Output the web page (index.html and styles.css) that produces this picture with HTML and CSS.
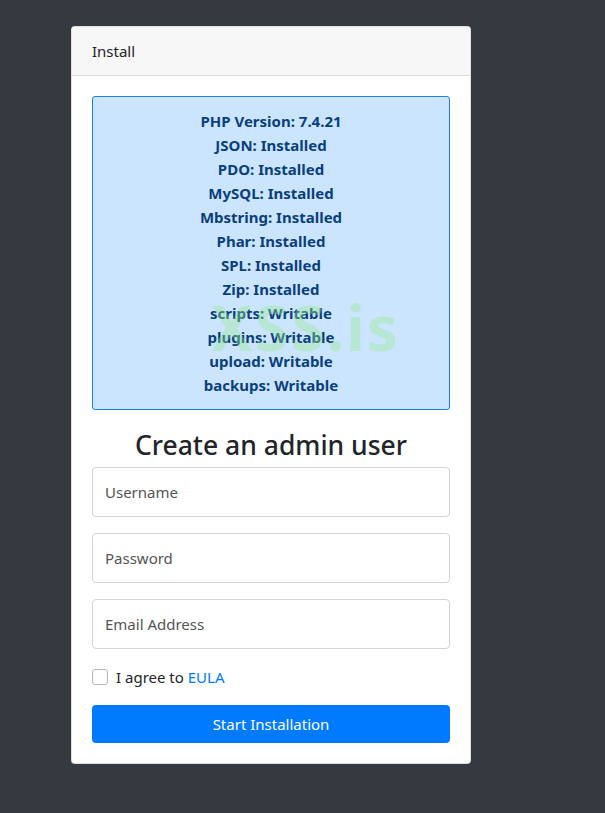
FILE: index.html
```html
<!DOCTYPE html>
<html>
<head>
<meta charset="utf-8">
<link rel="stylesheet" href="styles.css">
</head>
<body>
<div class="card">
  <div class="card-header">Install</div>
  <div class="card-body">
    <div class="alert">
      <div>PHP Version: 7.4.21</div>
      <div>JSON: Installed</div>
      <div>PDO: Installed</div>
      <div>MySQL: Installed</div>
      <div>Mbstring: Installed</div>
      <div>Phar: Installed</div>
      <div>SPL: Installed</div>
      <div>Zip: Installed</div>
      <div>scripts: Writable</div>
      <div>plugins: Writable</div>
      <div>upload: Writable</div>
      <div>backups: Writable</div>
      <span class="watermark">XSS.is</span>
    </div>
    <h2 class="title">Create an admin user</h2>
    <div class="field"><input class="input" type="text" placeholder="Username"></div>
    <div class="field"><input class="input" type="password" placeholder="Password"></div>
    <div class="field"><input class="input" type="email" placeholder="Email Address"></div>
    <label class="check"><span class="box"></span><span>I agree to <a class="link" href="#">EULA</a></span></label>
    <button class="btn">Start Installation</button>
  </div>
</div>
</body>
</html>
```
FILE: styles.css
```css
* { box-sizing: border-box; }
html, body { margin: 0; padding: 0; }
body {
  background: #343a40;
  font-family: "Noto Sans", "Open Sans", sans-serif;
  color: #212529;
  font-size: 16px;
  padding: 26px 0 0 71px;
  min-height: 813px;
}
.card {
  width: 400px;
  background: #fff;
  border: 1px solid rgba(0,0,0,.125);
  border-radius: 4px;
  overflow: hidden;
}
.card-header {
  background: #f7f7f7;
  border-bottom: 1px solid #dcdcdc;
  height: 49px;
  padding: 0 20px;
  display: flex;
  align-items: center;
  font-size: 15px;
  color: #212529;
}
.card-body { padding: 20px 20px 20px 20px; }
.alert {
  position: relative;
  background: #cce5ff;
  border: 1px solid #1e7fe8;
  border-radius: 3px;
  color: #0a3f7c;
  font-weight: 700;
  font-size: 15px;
  line-height: 24px;
  text-align: center;
  padding: 12px 0;
}
.watermark {
  position: absolute;
  left: 118px;
  top: 199px;
  font-size: 62px;
  line-height: 62px;
  font-weight: 700;
  color: rgba(150, 235, 140, 0.38);
  letter-spacing: 2px;
  pointer-events: none;
}
.title {
  font-size: 26.5px;
  font-weight: 500;
  text-align: center;
  margin: 18px 0 5px;
  line-height: 34px;
  color: #212529;
}
.field { margin-bottom: 16px; }
.input {
  width: 100%;
  height: 50px;
  border: 1px solid #ced4da;
  border-radius: 4px;
  padding: 0 12px;
  font-family: inherit;
  font-size: 15px;
  color: #495057;
}
.input::placeholder { color: #555; }
.check {
  display: flex;
  align-items: center;
  gap: 8px;
  font-size: 15px;
  color: #212529;
  margin: 18px 0 18px;
}
.box {
  width: 16px;
  height: 16px;
  border: 1px solid #adb5bd;
  border-radius: 3px;
  background: #fff;
}
.link { color: #007bff; text-decoration: none; }
.btn {
  display: block;
  width: 100%;
  height: 38px;
  background: #007bff;
  border: 0;
  border-radius: 4px;
  color: #fff;
  font-family: inherit;
  font-size: 15px;
}
```
